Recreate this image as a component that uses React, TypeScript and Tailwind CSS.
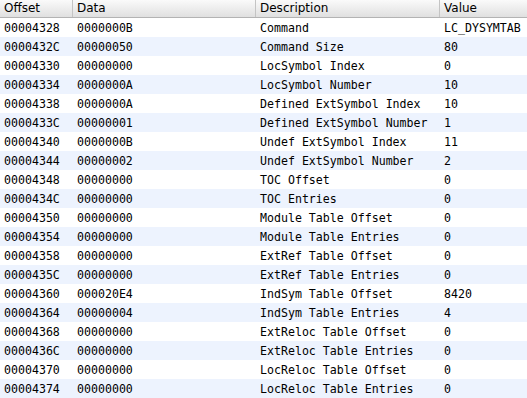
const rows: [string, string, string, string][] = [
  ["00004328", "0000000B", "Command", "LC_DYSYMTAB"],
  ["0000432C", "00000050", "Command Size", "80"],
  ["00004330", "00000000", "LocSymbol Index", "0"],
  ["00004334", "0000000A", "LocSymbol Number", "10"],
  ["00004338", "0000000A", "Defined ExtSymbol Index", "10"],
  ["0000433C", "00000001", "Defined ExtSymbol Number", "1"],
  ["00004340", "0000000B", "Undef ExtSymbol Index", "11"],
  ["00004344", "00000002", "Undef ExtSymbol Number", "2"],
  ["00004348", "00000000", "TOC Offset", "0"],
  ["0000434C", "00000000", "TOC Entries", "0"],
  ["00004350", "00000000", "Module Table Offset", "0"],
  ["00004354", "00000000", "Module Table Entries", "0"],
  ["00004358", "00000000", "ExtRef Table Offset", "0"],
  ["0000435C", "00000000", "ExtRef Table Entries", "0"],
  ["00004360", "000020E4", "IndSym Table Offset", "8420"],
  ["00004364", "00000004", "IndSym Table Entries", "4"],
  ["00004368", "00000000", "ExtReloc Table Offset", "0"],
  ["0000436C", "00000000", "ExtReloc Table Entries", "0"],
  ["00004370", "00000000", "LocReloc Table Offset", "0"],
  ["00004374", "00000000", "LocReloc Table Entries", "0"],
];

const cols = "grid grid-cols-[73px_183px_184px_1fr]";

export default function App() {
  return (
    <div className="w-[527px] h-[398px] overflow-hidden bg-white">
      <div
        className={`${cols} h-[18px] border-b border-[#b3b3b3] bg-gradient-to-b from-[#fafafa] to-[#e0e0e0] text-[12px] leading-[17px] text-black font-['DejaVu_Sans',sans-serif]`}
      >
        {["Offset", "Data", "Description", "Value"].map((h, i) => (
          <div key={h} className={`pl-1 ${i < 3 ? "border-r border-[#c4c4c4]" : ""}`}>
            {h}
          </div>
        ))}
      </div>
      <div className="font-['DejaVu_Sans_Mono',monospace] text-[11.6px] text-black">
        {rows.map((r, i) => (
          <div
            key={r[0]}
            className={`${cols} h-[19px] pt-[2px] leading-[17px] ${i % 2 === 1 ? "bg-[#edf3fe]" : "bg-white"}`}
          >
            {r.map((c, j) => (
              <div key={j} className="pl-1 whitespace-nowrap">
                {c}
              </div>
            ))}
          </div>
        ))}
      </div>
    </div>
  );
}
